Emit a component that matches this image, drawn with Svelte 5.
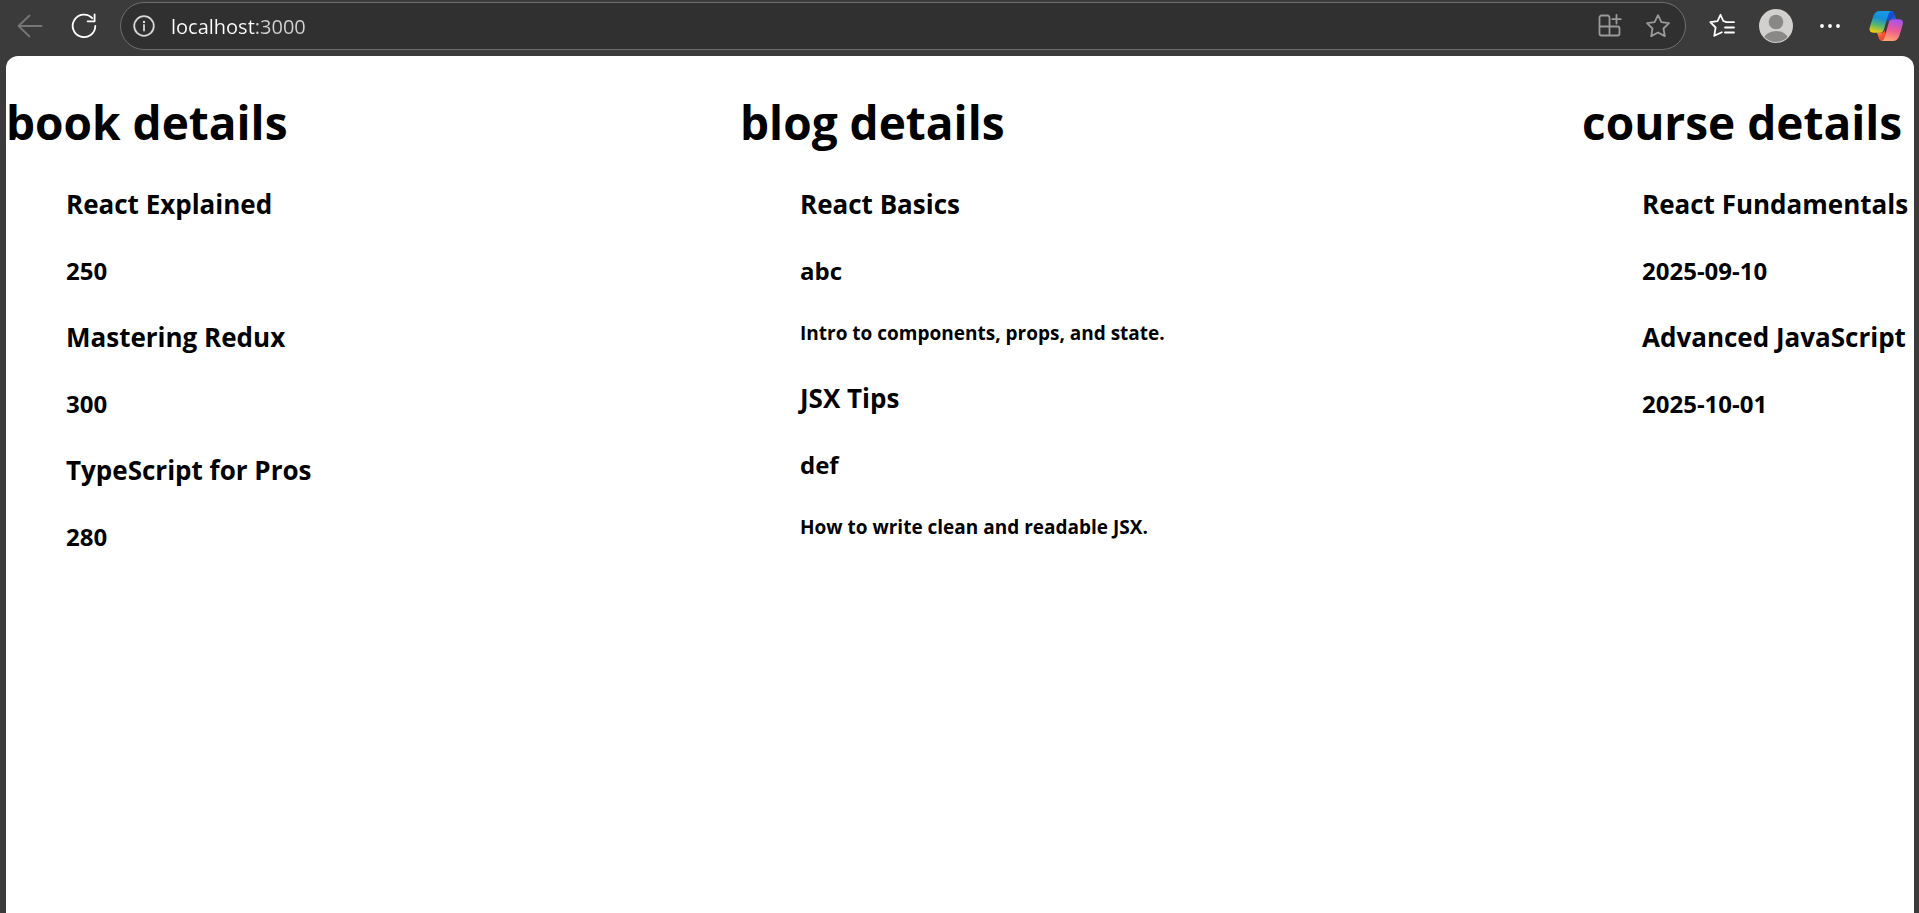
<script>
  let address = $state('localhost:3000');

  const books = [
    { title: 'React Explained', price: 250 },
    { title: 'Mastering Redux', price: 300 },
    { title: 'TypeScript for Pros', price: 280 }
  ];

  const blogs = [
    { title: 'React Basics', author: 'abc', text: 'Intro to components, props, and state.' },
    { title: 'JSX Tips', author: 'def', text: 'How to write clean and readable JSX.' }
  ];

  const courses = [
    { title: 'React Fundamentals', date: '2025-09-10' },
    { title: 'Advanced JavaScript', date: '2025-10-01' }
  ];
</script>

<div class="browser">
  <header class="toolbar">
    <button class="tool back" aria-label="Back" disabled>
      <svg width="26" height="26" viewBox="0 0 26 26"><path d="M24.500 13H1.500M12.500 2.500L1.500 13l11 10.500" /></svg>
    </button>
    <button class="tool reload" aria-label="Refresh">
      <svg width="28" height="28" viewBox="0 0 28 28"><path d="M22.300 6.200A11.300 11.300 0 1 0 25.300 14M24.600 2.500V9.300H17.600" /></svg>
    </button>

    <div class="address">
      <button class="tool info" aria-label="View site information">
        <svg width="24" height="24" viewBox="0 0 24 24"><circle cx="12" cy="12" r="9.800" /><path d="M12 11v5.500" /><circle class="dot" cx="12" cy="8" r="1.200" /></svg>
      </button>
      <input aria-label="Address bar" type="text" spellcheck="false" bind:value={address} />
      <button class="tool dim" aria-label="App available">
        <svg width="26" height="26" viewBox="0 0 26 26"><path d="M12.500 13.500V4.500a2 2 0 0 0-2-2H4.500a2 2 0 0 0-2 2V20.500a2 2 0 0 0 2 2H20.500a2 2 0 0 0 2-2V15.500a2 2 0 0 0-2-2H2.500M12.500 13.500v9M19.500 2v8.500M15.200 6.200h8.600" /></svg>
      </button>
      <button class="tool dim" aria-label="Add to favorites">
        <svg width="26" height="26" viewBox="0 0 26 26"><path d="M13 2.200l3.400 6.900 7.600 1.100-5.500 5.300 1.300 7.600-6.800-3.600-6.800 3.600 1.300-7.600L2 10.200l7.600-1.100z" /></svg>
      </button>
    </div>

    <button class="tool" aria-label="Favorites">
      <svg width="28" height="28" viewBox="0 0 28 28"><path d="M26 10.200h-7.500L15.300 9 12.500 2.800 9.500 9.200 2.300 10.200l5.300 5.300-1.300 8.300 7.500-3.500M17 15.500h9M17 20.500h9" /></svg>
    </button>
    <button class="tool" aria-label="Profile">
      <svg class="avatar" width="34" height="34" viewBox="0 0 34 34">
        <defs><clipPath id="face"><circle cx="17" cy="17" r="16" /></clipPath></defs>
        <circle cx="17" cy="17" r="17" fill="#d2d0ce" />
        <g clip-path="url(#face)" fill="#8a8886"><circle cx="17" cy="13" r="7.300" /><ellipse cx="17" cy="31" rx="12.500" ry="9" /></g>
      </svg>
    </button>
    <button class="tool" aria-label="Settings and more">
      <svg class="more" width="22" height="22" viewBox="0 0 22 22"><circle cx="3" cy="11" r="1.900" /><circle cx="11" cy="11" r="1.900" /><circle cx="19" cy="11" r="1.900" /></svg>
    </button>
    <button class="tool" aria-label="Copilot">
      <svg class="copilot" width="34" height="32" viewBox="0 0 34 32">
        <defs>
          <linearGradient id="cool" x1="0.600" y1="0" x2="0.350" y2="1"><stop offset="0" stop-color="#149bea" /><stop offset=".35" stop-color="#188fd5" /><stop offset=".68" stop-color="#5bb86b" /><stop offset="1" stop-color="#f2cc10" /></linearGradient>
          <linearGradient id="warm" x1="0.600" y1="0" x2="0.350" y2="1"><stop offset="0" stop-color="#a751f0" /><stop offset=".5" stop-color="#ee5c91" /><stop offset="1" stop-color="#ffa56b" /></linearGradient>
          <linearGradient id="navy" x1="0" y1="0" x2="1" y2="1"><stop offset="0" stop-color="#1769dc" /><stop offset=".5" stop-color="#1549c8" /><stop offset="1" stop-color="#2588e8" /></linearGradient>
          <linearGradient id="ember" x1="0" y1="0" x2="1" y2="1"><stop offset="0" stop-color="#ffb657" /><stop offset=".55" stop-color="#f35536" /><stop offset="1" stop-color="#d7363d" /></linearGradient>
        </defs>
        <path fill="url(#navy)" d="M16 1h6c2.500 0 3.200 1.500 3.900 4l.8 2.800c.3 1 .8 1.400 1.800 1.400h-6c-2 0-3.200 1.200-3.700 3z" />
        <path fill="url(#ember)" d="M17 31h-3.500c-2.500 0-3.300-1.600-4-4L8.700 24.300c-.4-1.200-1-1.600-2-1.600h6c1.700 0 2.700-1 3.200-2.500z" />
        <path fill="url(#cool)" d="M22.500 1H10.200C6.800 1 5 4 3.700 8L.8 17.300C-.2 21 1.500 22.700 5 22.700h6.300c2 0 3-1.200 3.600-3.200l4-13.500c.8-2.700 1.600-5 3.600-5z" />
        <path fill="url(#warm)" d="M12.500 31h12c3.400 0 5.100-3 6.400-7l2.700-9.300c1-3.700-.4-5.500-4-5.500h-6.200c-2 0-3 1.200-3.600 3.200l-3.900 13.600c-.8 2.800-1.500 5-3.400 5z" />
      </svg>
    </button>
  </header>

  <main class="page">
    <section>
      <h1>book details</h1>
      <div class="list">
        {#each books as book}
          <h3>{book.title}</h3>
          <h4>{book.price}</h4>
        {/each}
      </div>
    </section>
    <section>
      <h1>blog details</h1>
      <div class="list">
        {#each blogs as blog}
          <h3>{blog.title}</h3>
          <h4>{blog.author}</h4>
          <h5>{blog.text}</h5>
        {/each}
      </div>
    </section>
    <section>
      <h1>course details</h1>
      <div class="list">
        {#each courses as course}
          <h3>{course.title}</h3>
          <h4>{course.date}</h4>
        {/each}
      </div>
    </section>
  </main>
</div>

<style>
  :global(body) {
    background: #3b3b3b;
  }

  .browser {
    display: flex;
    flex-direction: column;
    box-sizing: border-box;
    min-height: 100vh;
    padding: 2px 5px 0 6px;
    font-family: 'Segoe UI', 'Open Sans', 'Noto Sans', sans-serif;
  }

  .toolbar {
    display: flex;
    align-items: center;
    height: 48px;
    margin-bottom: 6px;
  }

  .tool {
    display: flex;
    flex: none;
    align-items: center;
    justify-content: center;
    width: 54px;
    height: 48px;
    padding: 0;
    border: 0;
    background: none;
    color: #fff;
  }

  .tool svg {
    display: block;
    fill: none;
    stroke: currentColor;
    stroke-width: 1.800;
    stroke-linecap: round;
    stroke-linejoin: round;
  }

  .tool .avatar,
  .tool .copilot {
    stroke: none;
  }

  .tool .more {
    fill: currentColor;
    stroke: none;
  }

  .back {
    width: 48px;
    color: #767676;
  }

  .reload {
    width: 60px;
  }

  .address {
    display: flex;
    flex: 1;
    align-items: center;
    box-sizing: border-box;
    min-width: 0;
    height: 48px;
    margin-left: 6px;
    margin-right: 9px;
    padding-right: 3px;
    border: 1px solid #6e6e6e;
    border-radius: 24px;
    background: #303030;
  }

  .address ~ .tool:last-child {
    width: 57px;
  }

  .info {
    width: 46px;
    color: #d6d6d6;
  }

  .info .dot {
    fill: currentColor;
    stroke: none;
  }

  .dim {
    width: 48px;
    color: #9a9a9a;
  }

  .address input {
    flex: 1;
    min-width: 0;
    height: 32px;
    padding: 0 4px;
    border: 0;
    outline: 0;
    /* host in white, port in grey */
    background: linear-gradient(90deg, #fff 88px, #d2d2d2 88px);
    background-clip: text;
    color: transparent;
    caret-color: #fff;
    font: inherit;
    font-size: 20px;
  }

  .page {
    display: grid;
    flex: 1;
    grid-template-columns: minmax(0, 734fr) minmax(0, 842fr) minmax(0, 332fr);
    align-items: start;
    overflow: hidden;
    padding-top: 2px;
    border-radius: 12px 12px 0 0;
    background: #fff;
    color: #000;
    white-space: nowrap;
  }

  h1,
  h3,
  h4,
  h5 {
    font-weight: 700;
  }

  h1 {
    margin: 32px 0;
    font-size: 46px;
    line-height: 64px;
  }

  .list {
    padding-left: 60px;
  }

  h3 {
    margin: 28px 0;
    font-size: 26px;
    line-height: 37px;
  }

  h4 {
    margin: 32px 0;
    font-size: 24px;
    line-height: 32px;
  }

  h5 {
    margin: 33px 0;
    font-size: 19px;
    line-height: 27px;
  }
</style>
